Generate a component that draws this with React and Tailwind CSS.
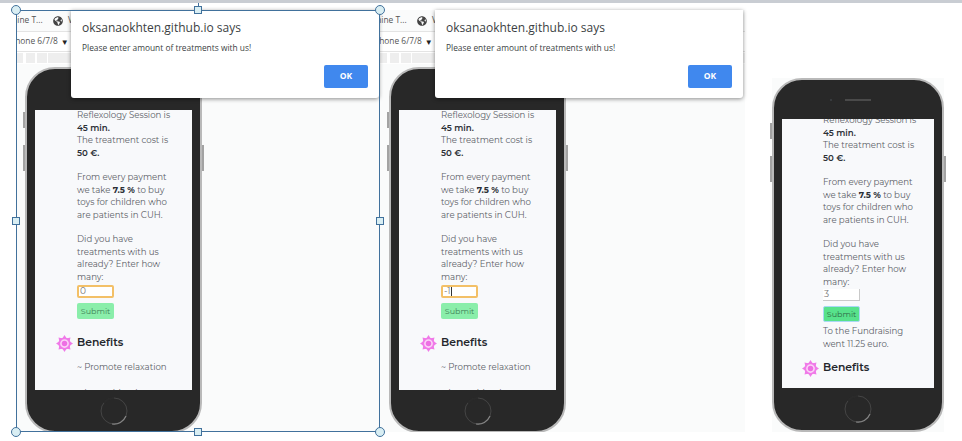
import React from 'react';
import { FaGlobeAmericas } from 'react-icons/fa';

const textFont = "font-['Montserrat','Inter','Noto_Sans',sans-serif]";

// pink sun next to the Benefits heading
const SunIcon = () => (
  <svg width="17" height="17" viewBox="0 0 34 34" className="shrink-0">
    <g fill="#f07ae8">
      {[0, 45, 90, 135, 180, 225, 270, 315].map((a) => (
        <polygon key={a} points="12,8 17,0 22,8" transform={`rotate(${a} 17 17)`} />
      ))}
    </g>
    <circle cx="17" cy="17" r="10.5" fill="#fbd4f7" stroke="#f07ae8" strokeWidth="3.5" />
    <circle cx="17" cy="17" r="5.5" fill="#ee6fe4" />
  </svg>
);

const HomeButton = () => (
  <svg width="30" height="30" viewBox="0 0 30 30">
    <circle cx="15" cy="15" r="13" fill="none" stroke="#454545" strokeWidth="1" />
    <path d="M5 7 A13 13 0 0 1 15 2" fill="none" stroke="#2a2a2a" strokeWidth="2" />
    <path d="M27 20 A13 13 0 0 1 13 28" fill="none" stroke="#858585" strokeWidth="1.2" />
  </svg>
);

const Phone = ({ width, topBezel, screenH, bottomBezel, pad, speaker, children }) => (
  <div className="relative" style={{ width }}>
    <div className="absolute left-[-2px] top-[45px] w-[2px] h-[16px] bg-[#a3a3a3]" />
    <div className="absolute left-[-2px] top-[78px] w-[2px] h-[26px] bg-[#a3a3a3]" />
    <div className="absolute right-[-2px] top-[78px] w-[2px] h-[26px] bg-[#a3a3a3]" />
    <div className="flex flex-col rounded-[30px] bg-[#282828] border-2 border-[#b9b9b9]" style={{ paddingLeft: pad, paddingRight: pad }}>
      <div className="flex items-center justify-center" style={{ height: topBezel }}>
        {speaker && (
          <div className="flex items-center gap-[13px] mr-[15px]">
            <div className="w-[2px] h-[2px] rounded-full bg-[#3d4045]" />
            <div className="w-[26px] h-[2px] bg-[#4a4a4a]" />
          </div>
        )}
      </div>
      <div className="overflow-hidden bg-[#f8f9fb]" style={{ height: screenH }}>
        {children}
      </div>
      <div className="flex items-center justify-center" style={{ height: bottomBezel }}>
        <HomeButton />
      </div>
    </div>
  </div>
);

const Body = ({ textPl, top, children }) => (
  <div
    className={`${textFont} text-[8.6px] leading-[12.5px] text-[#5d6168] whitespace-nowrap`}
    style={{ paddingLeft: textPl, marginTop: top }}
  >
    {children}
  </div>
);

const Copy = () => (
  <>
    <p>Reflexology Session is</p>
    <p className="font-semibold text-[#2c3036]">45 min.</p>
    <p>The treatment cost is</p>
    <p className="font-semibold text-[#2c3036]">50 €.</p>
    <p className="mt-[12px]">From every payment</p>
    <p>we take <b className="text-[#2c3036]">7.5 %</b> to buy</p>
    <p>toys for children who</p>
    <p>are patients in CUH.</p>
    <p className="mt-[12px]">Did you have</p>
    <p>treatments with us</p>
    <p>already? Enter how</p>
    <p>many:</p>
  </>
);

const Benefits = ({ className }) => (
  <div className={`flex items-center -ml-[21px] gap-[4px] ${className}`}>
    <SunIcon />
    <span className="text-[10.8px] font-semibold text-[#23262b]">Benefits</span>
  </div>
);

const DevTools = () => (
  <div className="overflow-hidden whitespace-nowrap font-['Open_Sans',sans-serif] text-[8.4px] text-[#555]">
    <div className="flex items-center h-[21px]">
      <span className="-ml-[20px] w-[46px]">Machine T...</span>
      <FaGlobeAmericas className="ml-[11px] text-[#444] text-[10px]" />
      <span className="ml-[5px]">V</span>
    </div>
    <div className="flex items-center h-[21px] bg-white border-y border-[#e4e4e4]">
      <span className="-ml-[8px]">iPhone 6/7/8</span>
      <span className="ml-[3px] text-[8px] text-[#222]">▼</span>
    </div>
    <div className="flex h-[12px] py-[1px] bg-white">
      <div className="w-[7px] bg-[#eeeeee]" />
      <div className="ml-[3px] w-[9px] bg-[#eeeeee]" />
      <div className="ml-[2px] w-[10px] bg-[#eeeeee]" />
      <div className="ml-[1px] w-[23px] bg-[#eeeeee]" />
      <div className="ml-[1px] flex-1 bg-[#f2f2f2]" />
    </div>
  </div>
);

const Alert = ({ left }) => (
  <div
    className="absolute top-[10px] w-[308px] h-[88px] rounded-b-[3px] bg-white shadow-[0_1px_4px_rgba(0,0,0,0.45)] font-['Open_Sans',sans-serif] text-[#3c3f44]"
    style={{ left }}
  >
    <p className="pl-[11px] pt-[10px] text-[12px] leading-[16px]">oksanaokhten.github.io says</p>
    <p className="pl-[11px] pt-[6px] text-[8.4px] leading-[12px]">Please enter amount of treatments with us!</p>
    <div className="absolute right-[11px] bottom-[10px] flex items-center justify-center w-[44px] h-[23px] rounded-[2px] bg-[#4088ee] text-[8.5px] font-bold text-white">
      OK
    </div>
  </div>
);

const Handle = ({ x, y, round }) => (
  <div
    className={`absolute border border-[#41719c] bg-[#d9eef3] ${round ? 'w-[10px] h-[10px] -ml-[5px] -mt-[5px] rounded-full' : 'w-[8px] h-[8px] -ml-[4px] -mt-[4px]'}`}
    style={{ left: x, top: y }}
  />
);

const Input = ({ value, focused, cursor, className }) => (
  <div
    className={`flex items-center w-[37px] pl-[1px] bg-white text-[9px] text-[#777] ${focused ? 'h-[13px] rounded-[2px] border-2 border-[#f3c067]' : 'h-[12px] border-r border-b border-[#c9c9c9]'} ${className}`}
  >
    {value}
    {cursor && <div className="w-[1px] h-[9px] bg-[#333]" />}
  </div>
);

const Submit = ({ pressed, className }) => (
  <div
    className={`flex items-center justify-center w-[37px] h-[16px] rounded-[2px] text-[8px] ${pressed ? 'bg-[#57e28b] border border-[#a9d8f5] text-[#2f6b47]' : 'bg-[#8aeeaa] text-[#3f7f58]'} ${className}`}
  >
    Submit
  </div>
);

const LeftPanel = ({ width, value, cursor }) => (
  <div className="shrink-0 h-[422px] overflow-hidden bg-[#fafbfb]" style={{ width }}>
    <DevTools />
    <div className="pt-[3px] pl-[9px]">
      <Phone width={177} topBezel={41} screenH={280} bottomBezel={41} pad={8}>
        <Body textPl={42} top={-1}>
          <Copy />
          <Input value={value} cursor={cursor} focused className="mt-[2px]" />
          <Submit className="mt-[5px]" />
          <Benefits className="mt-[16px]" />
          <p className="mt-[9px]">~ Promote relaxation</p>
          <p className="mt-[13px]">~ Lower blood</p>
        </Body>
      </Phone>
    </div>
  </div>
);

export default function App() {
  return (
    <div className="relative w-[962px] h-[441px] overflow-hidden bg-white">
      <div className="h-[3px] bg-[#c9cdd3]" />

      <div className="flex items-start pl-[16px] pt-[7px]">
        <LeftPanel width={364} value="0" />
        <LeftPanel width={365} value="-1" cursor />

        <div className="ml-[27px] mt-[68px] w-[172px] bg-[#fafbfb]">
          <Phone width={172} topBezel={39} screenH={269} bottomBezel={42} pad={8} speaker>
            <Body textPl={41} top={-5}>
              <Copy />
              <Input value="3" className="mt-[1px]" />
              <Submit pressed className="mt-[5px]" />
              <p className="mt-[3px]">To the Fundraising</p>
              <p>went 11.25 euro.</p>
              <Benefits className="mt-[10px]" />
              <p className="mt-[11px]">~ Promote relaxation</p>
            </Body>
          </Phone>
        </div>
      </div>

      <Alert left={71} />
      <Alert left={435} />

      {/* picture selection frame from the slide editor */}
      <div className="absolute left-[16px] top-[10px] w-[364px] h-[422px] border border-[#41719c]" />
      <div className="absolute left-[198px] top-[3px] w-[1px] h-[7px] bg-[#41719c]" />
      <Handle x={16} y={10} round />
      <Handle x={198} y={10} />
      <Handle x={380} y={10} round />
      <Handle x={16} y={221} />
      <Handle x={380} y={221} />
      <Handle x={16} y={432} round />
      <Handle x={198} y={432} />
      <Handle x={380} y={432} round />
    </div>
  );
}
